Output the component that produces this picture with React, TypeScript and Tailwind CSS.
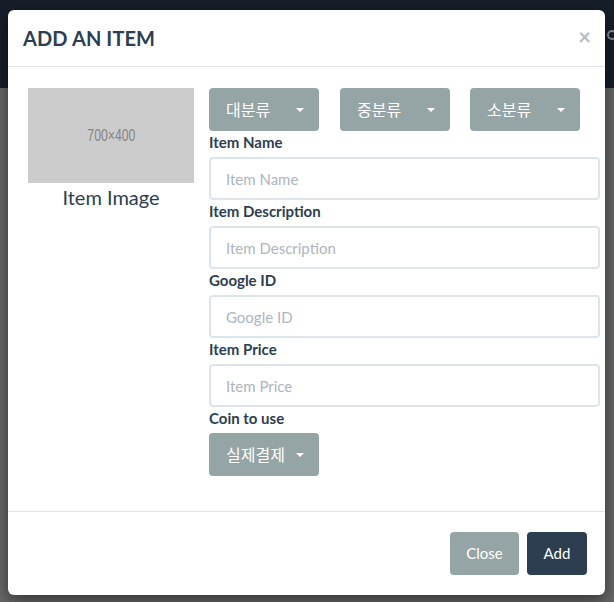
import React from 'react';

const Caret: React.FC = () => (
  <span className="ml-auto inline-block h-0 w-0 border-x-[4px] border-t-[4px] border-x-transparent border-t-white" />
);

const DropButton: React.FC<{ label: string }> = ({ label }) => (
  <button
    type="button"
    className="flex h-[43px] w-[110px] items-center rounded-[4px] bg-[#95a5a6] pl-[17px] pr-[15px] text-[16px] text-white"
    style={{ fontFamily: 'Lato, "Noto Sans CJK KR", sans-serif' }}
  >
    <span>{label}</span>
    <Caret />
  </button>
);

const Field: React.FC<{ label: string }> = ({ label }) => (
  <div>
    <label className="block h-[26px] pt-[1px] text-[15px] font-bold leading-[21px] text-[#2c3e50]">{label}</label>
    <input
      type="text"
      placeholder={label}
      className="block h-[43px] w-[391px] rounded-[4px] border-2 border-[#dce4ec] bg-white px-[15px] text-[15px] text-[#2c3e50] outline-none placeholder:text-[#acb6c0]"
    />
  </div>
);

const App: React.FC = () => {
  return (
    <div
      className="relative h-[602px] w-[614px] overflow-hidden bg-[#676767]"
      style={{ fontFamily: 'Lato, "Noto Sans CJK KR", sans-serif' }}
    >
      {/* navbar behind the backdrop */}
      <div className="h-[88px] w-full bg-[#161e29]" />
      <span className="absolute left-[607px] top-[30px] h-[10px] w-[10px] rounded-full border-2 border-[#8a8f95]" />

      {/* Modal */}
      <div className="absolute left-[8px] top-[10px] h-[585px] w-[597px] rounded-[6px] bg-white shadow-[0_5px_15px_rgba(0,0,0,0.5)]">
        <div className="flex h-[57px] items-center justify-between border-b border-[#e5e5e5] pl-[15px] pr-[14px]">
          <h4 className="text-[20px] font-bold tracking-[0.1px] text-[#2c3e50]">ADD AN ITEM</h4>
          <span className="mb-[2px] text-[22px] font-bold leading-none text-[#b4bcc2]">×</span>
        </div>

        <div className="flex h-[444px] pl-[20px] pt-[21px]">
          <div className="w-[166px]">
            <div className="flex h-[95px] w-[166px] items-center justify-center bg-[#cccccc]">
              <span
                className="inline-block scale-x-[0.72] pt-[1px] text-[17px] text-[#858585]"
                style={{ fontFamily: '"Liberation Sans", sans-serif' }}
              >
                700×400
              </span>
            </div>
            <div className="-mt-[1px] text-center text-[20px] text-[#2c3e50]">Item Image</div>
          </div>

          <div className="ml-[15px] flex flex-col">
            <div className="flex">
              <div className="w-[131px]">
                <DropButton label="대분류" />
              </div>
              <div className="w-[130px]">
                <DropButton label="중분류" />
              </div>
              <div className="w-[130px]">
                <DropButton label="소분류" />
              </div>
            </div>
            <Field label="Item Name" />
            <Field label="Item Description" />
            <Field label="Google ID" />
            <Field label="Item Price" />
            <label className="block h-[26px] pt-[1px] text-[15px] font-bold leading-[21px] text-[#2c3e50]">Coin to use</label>
            <DropButton label="실제결제" />
          </div>
        </div>

        <div className="flex justify-end gap-[8px] border-t border-[#e5e5e5] pr-[18px] pt-[20px]">
          <button type="button" className="h-[43px] w-[69px] rounded-[4px] bg-[#95a5a6] text-[15px] text-white">
            Close
          </button>
          <button type="button" className="h-[43px] w-[60px] rounded-[4px] bg-[#2c3e50] text-[15px] text-white">
            Add
          </button>
        </div>
      </div>
    </div>
  );
};

export default App;
